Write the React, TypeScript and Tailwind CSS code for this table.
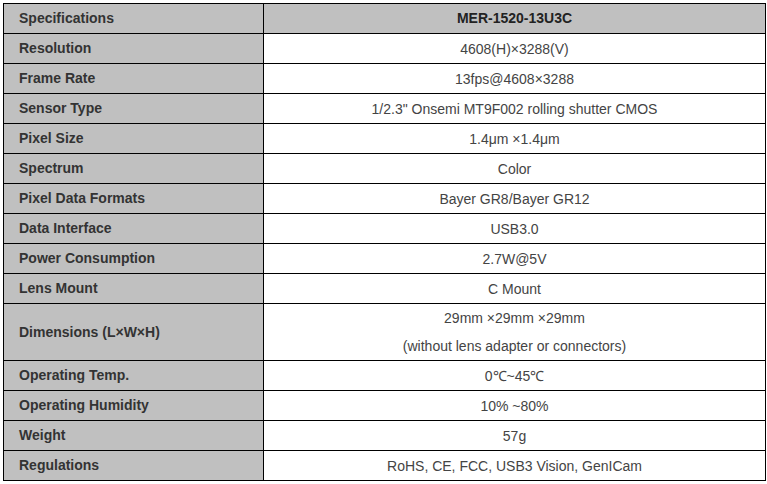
import React from "react";

// Camera spec sheet — two-column table with a gray label column.

type Row = { label: string; value: string[] };

const ROWS: Row[] = [
  { label: "Resolution", value: ["4608(H)×3288(V)"] },
  { label: "Frame Rate", value: ["13fps@4608×3288"] },
  { label: "Sensor Type", value: ['1/2.3" Onsemi MT9F002 rolling shutter CMOS'] },
  { label: "Pixel Size", value: ["1.4μm ×1.4μm"] },
  { label: "Spectrum", value: ["Color"] },
  { label: "Pixel Data Formats", value: ["Bayer GR8/Bayer GR12"] },
  { label: "Data Interface", value: ["USB3.0"] },
  { label: "Power Consumption", value: ["2.7W@5V"] },
  { label: "Lens Mount", value: ["C Mount"] },
  {
    label: "Dimensions (L×W×H)",
    value: ["29mm ×29mm ×29mm", "(without lens adapter or connectors)"],
  },
  { label: "Operating Temp.", value: ["0℃~45℃"] },
  { label: "Operating Humidity", value: ["10% ~80%"] },
  { label: "Weight", value: ["57g"] },
  { label: "Regulations", value: ["RoHS, CE, FCC, USB3 Vision, GenICam"] },
];

const FONT = { fontFamily: '"Liberation Sans", Arial, sans-serif' };

export default function App() {
  return (
    <div className="min-h-screen bg-white pl-[3px] pt-[3px]" style={FONT}>
      <table className="w-[763px] table-fixed border-collapse border border-black text-[14px] text-[#333]">
        <colgroup>
          <col className="w-[260px]" />
          <col />
        </colgroup>
        <thead>
          <tr className="h-[30px]">
            <th className="border border-black bg-[#c0c0c0] pl-[15px] text-left font-bold text-[#333]">
              Specifications
            </th>
            <th className="border border-black bg-[#c0c0c0] text-center font-bold text-[#222]">
              MER-1520-13U3C
            </th>
          </tr>
        </thead>
        <tbody>
          {ROWS.map((r) => (
            <tr key={r.label} className={r.value.length > 1 ? "h-[57px]" : "h-[30px]"}>
              <td className="border border-black bg-[#c0c0c0] pl-[15px] font-bold text-[#333]">
                {r.label}
              </td>
              <td className="border border-black bg-white text-center leading-[28px] text-[#444]">
                {r.value.map((v) => (
                  <div key={v}>{v}</div>
                ))}
              </td>
            </tr>
          ))}
        </tbody>
      </table>
    </div>
  );
}
